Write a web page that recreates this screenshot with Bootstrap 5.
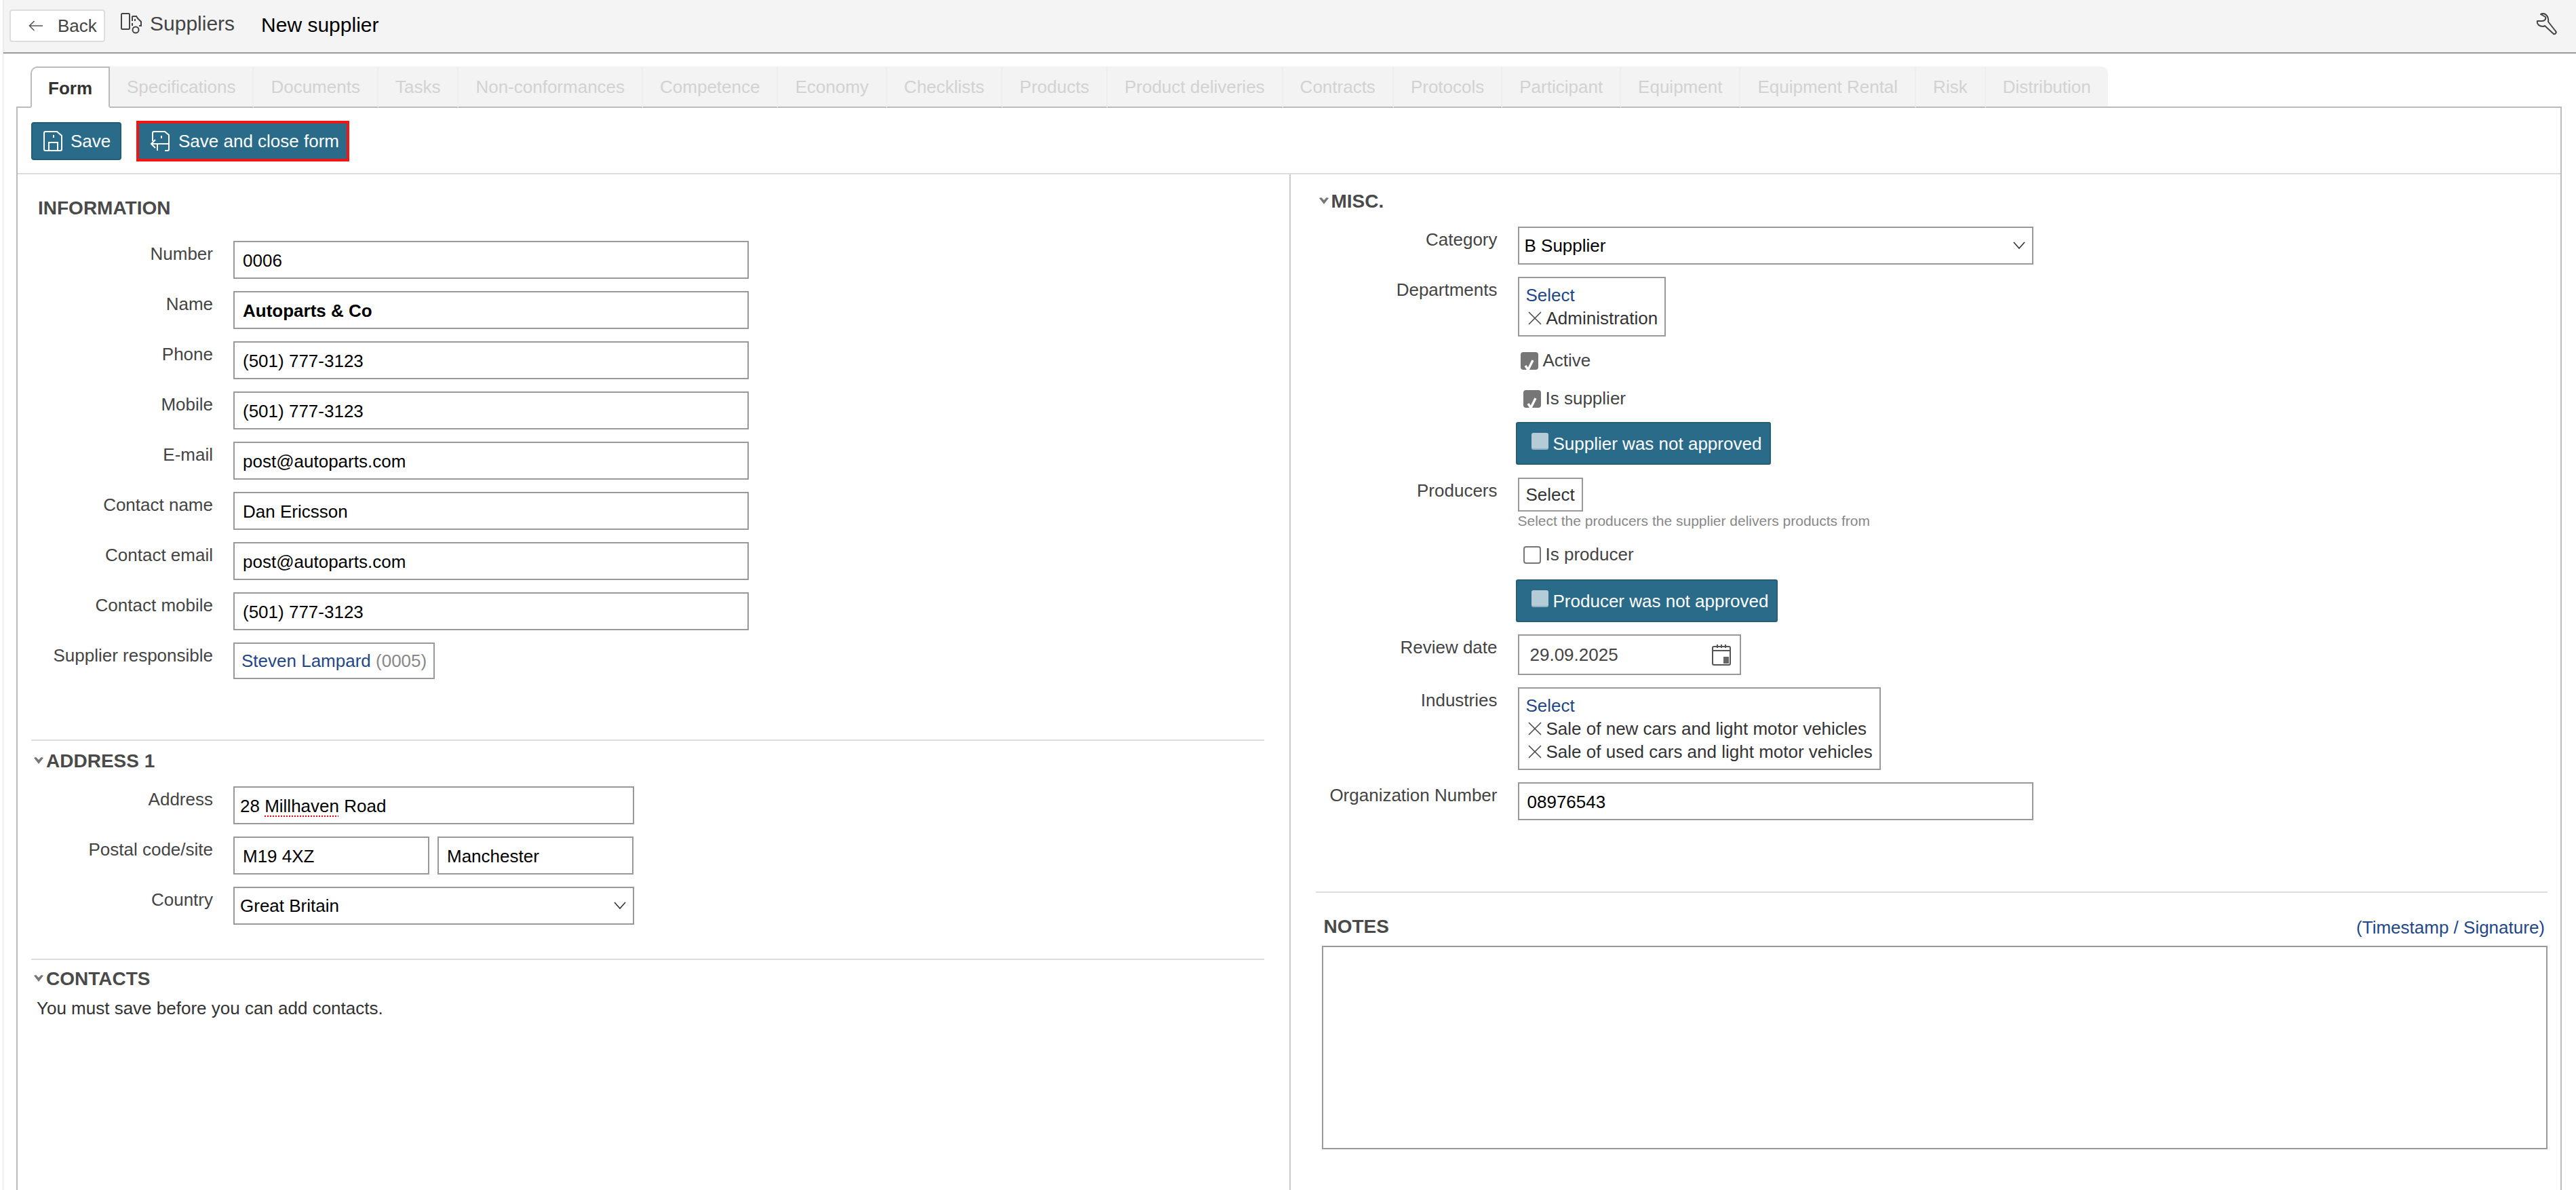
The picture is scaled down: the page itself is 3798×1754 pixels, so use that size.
<!DOCTYPE html>
<html lang="en">
<head>
  <meta charset="UTF-8">
  <title>New supplier</title>
  <link href="https://cdn.jsdelivr.net/npm/bootstrap@5.3.0/dist/css/bootstrap.min.css" rel="stylesheet">
  <script src="https://cdn.jsdelivr.net/npm/bootstrap@5.3.0/dist/js/bootstrap.bundle.min.js"></script>
  <style>
    html, body { height: 100%; }
    body {
      background: #fff;
      color: #444;
      font-family: "Liberation Sans", Arial, sans-serif;
      font-size: 26px;
      line-height: 34px;
      overflow: hidden;
    }
    .page-shell { height: 1754px; margin-left: 4px; border-left: 1px solid #e4e4e4; display: flex; flex-direction: column; }

    .topbar { height: 79px; flex: none; background: #f4f4f4; border-bottom: 2px solid #999; padding: 14px 25px 0 9px; }
    .back-btn { height: 48px; width: 141px; background: #fff; border: 2px solid #ddd; border-radius: 4px; color: #444; font-size: 26px; padding: 0 0 0 26px; gap: 21px; line-height: 48px; }
    .crumb { font-size: 30px; color: #444; margin-left: 23px; margin-top: 3px; gap: 9px; line-height: 36px; }
    .crumb-title { font-size: 30px; color: #000; margin-left: 39px; margin-top: 3px; line-height: 40px; }

    .tab-strip { margin: 19px 0 -2px 40px; border: 0; flex: none; position: relative; z-index: 1; }
    .tab-strip .nav-link {
      height: 61px; line-height: 60px; padding: 0 25px; font-size: 26px; color: #d2d2d2;
      background: #f3f3f3; border: 0; border-right: 2px solid #eeeeee; border-bottom: 2px solid #bbb; border-radius: 0; margin: 0;
    }
    .tab-strip .nav-item:last-child .nav-link { border-right: 0; border-top-right-radius: 10px; }
    .tab-strip .nav-link.active {
      color: #333; font-weight: 700; background: #fff; padding: 0 24px; border: 2px solid #bbb; border-bottom: 2px solid #fff; border-radius: 10px 0 0 0;
    }

    .form-panel { flex: 1; margin: 0 21px 0 19px; border: 2px solid #bbb; border-bottom: 0; display: flex; flex-direction: column; min-height: 0; }
    .tool-row { height: 98px; flex: none; border-bottom: 2px solid #ddd; padding: 19px 0 0 20px; gap: 22px; align-items: flex-start; }
    .teal-btn { background: #2a6b8a; border: 2px solid #235d78; border-radius: 4px; color: #fff; font-size: 26px; line-height: 34px; display: inline-flex; align-items: center; padding: 0; }
    .teal-btn:hover { background: #2a6b8a; color: #fff; }
    .save-btn { height: 56px; width: 133px; padding-left: 16px; gap: 12px; margin-top: 2px; }
    .close-btn { height: 60px; width: 314px; border: 4px solid #f01616; border-radius: 0; padding-left: 16px; gap: 12px; }

    .left-pane { padding: 0 37px 0 20px; }
    .right-pane { padding: 0 19px 0 37px; border-left: 2px solid #ccc; }

    .sec-head { color: #4a4a4a; font-size: 28px; font-weight: 700; line-height: 40px; }
    .sec-info { padding: 30px 0 0 10px; margin-bottom: 28px; }
    .sec-fold { display: flex; align-items: center; gap: 4px; padding-left: 4px; }
    .sec-misc { margin: 20px 0 17px; padding-left: 5px; }
    .fold-mark { width: 14px; height: 10px; flex: none; margin-top: -2px; }
    .sep { border-top: 2px solid #ddd; height: 0; }

    .field-row { display: flex; gap: 30px; align-items: flex-start; margin-bottom: 18px; }
    .field-name { width: 268px; flex: none; text-align: right; color: #444; line-height: 38px; }
    .field-box { height: 56px; width: 760px; border: 2px solid #999; background: #fff; color: #000; padding: 0 12px; line-height: 54px; white-space: nowrap; }
    .field-bold { font-weight: 700; }
    .field-wide-left { width: 591px; }
    .field-half { width: 289px; }
    .select-box { display: flex; align-items: center; justify-content: space-between; padding: 0 10px 0 8px; }
    .chev-icon { width: 18px; height: 12px; }
    .pick-box { border: 2px solid #999; background: #fff; padding: 8px 10px; line-height: 34px; color: #333; white-space: nowrap; }
    .pick-line { display: flex; align-items: center; gap: 6px; }
    .x-icon { width: 22px; height: 22px; flex: none; margin-left: 2px; }
    .link-blue { color: #1f4788; text-decoration: none; }
    .muted-id { color: #888; }

    .chk-row { display: flex; align-items: center; gap: 7px; line-height: 34px; color: #444; }
    .chk { width: 26px; height: 26px; flex: none; border-radius: 4px; margin-top: 2px; }
    .chk-on { background: #767676; }
    .chk-off { background: #fff; border: 2px solid #767676; }
    .chk-fade { background: #b5ccd6; border-radius: 3px; width: 25px; height: 25px; flex: none; margin-top: -6px; border-bottom: 2px solid #8fafbd; }
    .approve-btn { height: 63px; padding: 0 12px 0 21px; gap: 7px; border-radius: 3px; }

    .hint { font-size: 21px; color: #888; line-height: 28px; }
    .date-box { height: 60px; width: 329px; border: 2px solid #999; display: flex; align-items: center; justify-content: space-between; padding: 0 12px 0 16px; color: #444; }
    .cal-icon { width: 30px; height: 32px; }
    .notes-head { display: flex; justify-content: space-between; padding: 30px 4px 0 12px; line-height: 42px; height: 78px; }
    .notes-area { height: 300px; border: 2px solid #999; margin-left: 9px; }
    .pencil { width: 18px; }
  </style>
</head>
<body>
  <div class="page-shell">
    <div class="topbar d-flex align-items-start">
      <a class="back-btn btn d-flex align-items-center" href="#">
        <svg width="22" height="16" viewBox="0 0 22 16" fill="none" stroke="#555" stroke-width="1.6"><path d="M21 8H1.5M8.5 1 1.5 8l7 7"/></svg>
        <span>Back</span>
      </a>
      <span class="crumb d-flex align-items-center">
        <svg width="34" height="32" viewBox="0 0 34 32" fill="none" stroke="#444" stroke-width="2"><rect x="1" y="1" width="12" height="23" rx="1.5"/><path d="M17 5h6l2 3 5 5v6h-3M17 5v7M21 9v3"/><circle cx="22" cy="25" r="4.5"/><path d="M17 15v4"/></svg>
        <span>Suppliers</span>
      </span>
      <span class="crumb-title">New supplier</span>
      <svg class="ms-auto mt-1" width="34" height="34" viewBox="0 0 34 34" fill="none" stroke="#444" stroke-width="2"><path d="M2 13c-1 5 3 8 9 8l2-1 13 12c2 1 5-2 3-4L18 14c1-6-2-11-7-12-2 0-3 0-4 1l7 4c1 3-1 6-5 6z" stroke-linejoin="round"/></svg>
    </div>

    <ul class="nav nav-tabs tab-strip">
      <li class="nav-item"><a class="nav-link active" href="#">Form</a></li>
      <li class="nav-item"><a class="nav-link" href="#">Specifications</a></li>
      <li class="nav-item"><a class="nav-link" href="#">Documents</a></li>
      <li class="nav-item"><a class="nav-link" href="#">Tasks</a></li>
      <li class="nav-item"><a class="nav-link" href="#">Non-conformances</a></li>
      <li class="nav-item"><a class="nav-link" href="#">Competence</a></li>
      <li class="nav-item"><a class="nav-link" href="#">Economy</a></li>
      <li class="nav-item"><a class="nav-link" href="#">Checklists</a></li>
      <li class="nav-item"><a class="nav-link" href="#">Products</a></li>
      <li class="nav-item"><a class="nav-link" href="#">Product deliveries</a></li>
      <li class="nav-item"><a class="nav-link" href="#">Contracts</a></li>
      <li class="nav-item"><a class="nav-link" href="#">Protocols</a></li>
      <li class="nav-item"><a class="nav-link" href="#">Participant</a></li>
      <li class="nav-item"><a class="nav-link" href="#">Equipment</a></li>
      <li class="nav-item"><a class="nav-link" href="#">Equipment Rental</a></li>
      <li class="nav-item"><a class="nav-link" href="#">Risk</a></li>
      <li class="nav-item"><a class="nav-link" href="#">Distribution</a></li>
    </ul>

    <div class="form-panel">
      <div class="tool-row d-flex">
        <button class="btn teal-btn save-btn">
          <svg width="28" height="30" viewBox="0 0 28 30" fill="none" stroke="#fff" stroke-width="2"><path d="M3 1h17l7 6v20a2 2 0 0 1-2 2H3a2 2 0 0 1-2-2V3a2 2 0 0 1 2-2z"/><path d="M8 29V17h13v12M15 6v4"/></svg>
          <span>Save</span>
        </button>
        <button class="btn teal-btn close-btn">
          <svg width="30" height="32" viewBox="0 0 30 32" fill="none" stroke="#fff" stroke-width="2"><path d="M4 16V4a2 2 0 0 1 2-2h16l6 5v21a2 2 0 0 1-2 2h-4M17 8v4M28 20H3M8 14l-6 6 6 6M11 20v10"/></svg>
          <span>Save and close form</span>
        </button>
      </div>

      <div class="row g-0 flex-grow-1">
        <div class="col-6 left-pane">
          <div class="sec-head sec-info">INFORMATION</div>
          <div class="field-row"><div class="field-name">Number</div><div class="field-box">0006</div></div>
          <div class="field-row"><div class="field-name">Name</div><div class="field-box field-bold">Autoparts &amp; Co</div></div>
          <div class="field-row"><div class="field-name">Phone</div><div class="field-box">(501) 777-3123</div></div>
          <div class="field-row"><div class="field-name">Mobile</div><div class="field-box">(501) 777-3123</div></div>
          <div class="field-row"><div class="field-name">E-mail</div><div class="field-box">post@autoparts.com</div></div>
          <div class="field-row"><div class="field-name">Contact name</div><div class="field-box">Dan Ericsson</div></div>
          <div class="field-row"><div class="field-name">Contact email</div><div class="field-box">post@autoparts.com</div></div>
          <div class="field-row"><div class="field-name">Contact mobile</div><div class="field-box">(501) 777-3123</div></div>
          <div class="field-row resp-row"><div class="field-name">Supplier responsible</div><div class="pick-box"><a class="link-blue" href="#">Steven Lampard</a> <span class="muted-id">(0005)</span></div></div>

          <div class="sep addr-sep"></div>
          <div class="sec-head sec-fold addr-head">
            <svg class="fold-mark" viewBox="0 0 14 10"><path d="M0 1l3-1 4 4 4-4 3 1-7 9z" fill="#777"/></svg>ADDRESS 1
          </div>
          <div class="field-row"><div class="field-name">Address</div><div class="field-box field-wide-left addr-box">28 <span class="spell">Millhaven</span> Road</div></div>
          <div class="field-row"><div class="field-name">Postal code/site</div><div class="d-flex gap-1p"><div class="field-box field-half">M19 4XZ</div><div class="field-box field-half">Manchester</div></div></div>
          <div class="field-row"><div class="field-name">Country</div>
            <div class="field-box field-wide-left select-box"><span>Great Britain</span><svg class="chev-icon" viewBox="0 0 18 12" fill="none" stroke="#333" stroke-width="1.6"><path d="M1 1l8 9 8-9"/></svg></div>
          </div>
          <div class="sep contact-sep"></div>
          <div class="sec-head sec-fold contact-head">
            <svg class="fold-mark" viewBox="0 0 14 10"><path d="M0 1l3-1 4 4 4-4 3 1-7 9z" fill="#777"/></svg>CONTACTS
          </div>
          <div class="contact-note">You must save before you can add contacts.</div>
        </div>

        <div class="col-6 right-pane">
          <div class="sec-head sec-fold sec-misc">
            <svg class="fold-mark" viewBox="0 0 14 10"><path d="M0 1l3-1 4 4 4-4 3 1-7 9z" fill="#777"/></svg>MISC.
          </div>
          <div class="field-row"><div class="field-name">Category</div>
            <div class="field-box select-box"><span>B Supplier</span><svg class="chev-icon" viewBox="0 0 18 12" fill="none" stroke="#333" stroke-width="1.6"><path d="M1 1l8 9 8-9"/></svg></div>
          </div>
          <div class="field-row"><div class="field-name">Departments</div>
            <div class="pick-box dept-box"><a class="link-blue d-block" href="#">Select</a>
              <div class="pick-line"><svg class="x-icon" viewBox="0 0 22 22" fill="none" stroke="#444" stroke-width="1.5"><path d="M2 2l18 18M20 2 2 20"/></svg>Administration</div>
            </div>
          </div>
          <div class="indent-col">
            <div class="chk-row active-row"><span class="chk chk-on"><svg viewBox="0 0 26 26" fill="none" stroke="#fff" stroke-width="3.4"><path d="M7 14l4 6 7-14"/></svg></span>Active</div>
            <div class="chk-row supplier-row"><span class="chk chk-on"><svg viewBox="0 0 26 26" fill="none" stroke="#fff" stroke-width="3.4"><path d="M7 14l4 6 7-14"/></svg></span>Is supplier</div>
            <button class="btn teal-btn approve-btn"><span class="chk-fade"></span>Supplier was not approved</button>
          </div>
          <div class="field-row prod-row"><div class="field-name">Producers</div>
            <div>
              <div class="pick-box d-inline-block prod-box">Select</div>
              <div class="hint">Select the producers the supplier delivers products from</div>
            </div>
          </div>
          <div class="indent-col">
            <div class="chk-row producer-row"><span class="chk chk-off"></span>Is producer</div>
            <button class="btn teal-btn approve-btn"><span class="chk-fade"></span>Producer was not approved</button>
          </div>
          <div class="field-row date-row"><div class="field-name">Review date</div>
            <div class="date-box"><span>29.09.2025</span>
              <svg class="cal-icon" viewBox="0 0 30 32" fill="none" stroke="#555" stroke-width="2"><rect x="2" y="4" width="26" height="27" rx="2"/><path d="M2 10h26M9 1v5M15 1v5M21 1v5"/><rect x="18" y="19" width="8" height="10" fill="#666" stroke="none"/></svg>
            </div>
          </div>
          <div class="field-row"><div class="field-name">Industries</div>
            <div class="pick-box"><a class="link-blue d-block" href="#">Select</a>
              <div class="pick-line"><svg class="x-icon" viewBox="0 0 22 22" fill="none" stroke="#444" stroke-width="1.5"><path d="M2 2l18 18M20 2 2 20"/></svg>Sale of new cars and light motor vehicles</div>
              <div class="pick-line"><svg class="x-icon" viewBox="0 0 22 22" fill="none" stroke="#444" stroke-width="1.5"><path d="M2 2l18 18M20 2 2 20"/></svg>Sale of used cars and light motor vehicles</div>
            </div>
          </div>
          <div class="field-row"><div class="field-name">Organization Number</div><div class="field-box">08976543</div></div>

          <div class="sep notes-sep"></div>
          <div class="notes-head"><span class="sec-head">NOTES</span><a class="link-blue" href="#">(Timestamp / Signature)</a></div>
          <div class="notes-area"></div>
        </div>
      </div>
    </div>
  </div>
  <style>
    .gap-1p { display: flex; gap: 12px; }
    .resp-row { margin-top: 2px; }
    .addr-sep { margin-top: 89px; }
    .addr-head { margin: 10px 0 17px; }
    .addr-box { padding-left: 8px; }
    .spell { text-decoration: underline dotted #e00; text-underline-offset: 5px; text-decoration-thickness: 2px; }
    .contact-sep { margin-top: 50px; }
    .contact-head { margin-top: 8px; }
    .contact-note { padding-left: 8px; margin-top: 6px; color: #333; }
    .indent-col { padding-left: 295px; display: flex; flex-direction: column; align-items: flex-start; }
    .active-row { margin: 0 0 0 7px; height: 34px; }
    .supplier-row { margin: 22px 0 18px 11px; height: 34px; }
    .prod-row { margin-top: 19px; margin-bottom: 18px; }
    .prod-box { padding: 6px 10px; }
    .producer-row { margin: 0 0 20px 11px; height: 34px; }
    .date-row { margin-top: 18px; }
    .notes-sep { margin-top: 105px; }
  </style>
</body>
</html>
